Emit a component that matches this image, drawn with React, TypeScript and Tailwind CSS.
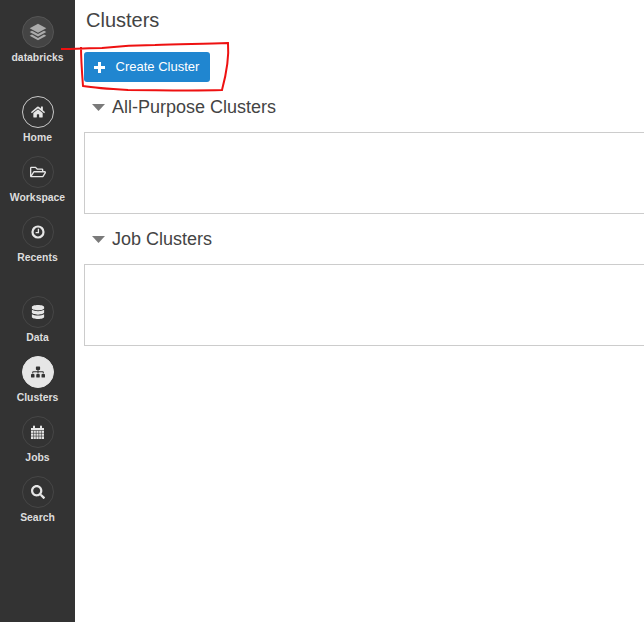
import { FaDatabase, FaHome, FaRegFolderOpen, FaSearch, FaSitemap } from 'react-icons/fa';
import type { ComponentType } from 'react';

interface NavItemProps {
  label: string;
  icon: ComponentType<{ size?: number; className?: string }>;
  size?: number;
  state?: 'active' | 'current';
}

function ClockIcon({ size = 14 }: { size?: number }) {
  return (
    <svg width={size} height={size} viewBox="0 0 14 14" fill="none" stroke="currentColor">
      <circle cx="7" cy="7" r="5.5" strokeWidth="2.2" />
      <path d="M7.4 3.8V7.6H4.6" strokeWidth="1.3" />
    </svg>
  );
}

function CalendarIcon({ size = 15 }: { size?: number }) {
  return (
    <svg width={size} height={size} viewBox="0 0 15 15" fill="currentColor">
      <path d="M1 3h2V1.5a1 1 0 0 1 2 0V3h5V1.5a1 1 0 0 1 2 0V3h2v11H1Z" />
      <path d="M1 5.5h13M1 8.3h13M1 11.1h13M3.6 5.5V14M6.2 5.5V14M8.8 5.5V14M11.4 5.5V14" stroke="#333333" strokeWidth="0.6" fill="none" />
    </svg>
  );
}

function NavItem({ label, icon: Icon, size = 13, state }: NavItemProps) {
  const ring =
    state === 'active'
      ? 'bg-[#e6e6e6] border-[#e6e6e6] text-[#333333]'
      : state === 'current'
        ? 'border-[#c8c8c8] text-[#e6e6e6]'
        : 'border-[#464646] text-[#e6e6e6]';
  return (
    <div className="h-[60px] flex flex-col items-center">
      <div className={`w-8 h-8 rounded-full border flex items-center justify-center ${ring}`}>
        <Icon size={size} />
      </div>
      <span className="mt-[3px] text-[10.4px] leading-[14px] font-bold text-[#dddddd]">{label}</span>
    </div>
  );
}

function StackIcon() {
  return (
    <svg width="20" height="20" viewBox="0 0 18 18" fill="#ababab">
      <path d="M9 1.5 16.5 5.6 9 9.7 1.5 5.6Z" />
      <path d="M3.6 7.9 9 10.9 14.4 7.9 16.5 9 9 13.1 1.5 9Z" />
      <path d="M3.6 11.3 9 14.3 14.4 11.3 16.5 12.4 9 16.5 1.5 12.4Z" />
    </svg>
  );
}

function Caret() {
  return (
    <svg width="13" height="7" viewBox="0 0 13 7" fill="#7a7a7a">
      <path d="M0 0H13L6.5 7Z" />
    </svg>
  );
}

function Section({ title }: { title: string }) {
  return (
    <>
      <div className="h-[24px] flex items-center pl-[8px]">
        <Caret />
        <span className="ml-[7px] text-[18px] leading-[24px] text-[#444444]">{title}</span>
      </div>
      <div className="mt-[13px] h-[82px] border border-r-0 border-[#cccccc] bg-white" />
    </>
  );
}

export default function App() {
  return (
    <div className="relative flex h-[622px] w-[644px] overflow-hidden bg-white font-['Liberation_Sans',Arial,sans-serif]">
      <aside className="w-[75px] shrink-0 bg-[#333333] pt-4">
        <div className="flex flex-col items-center">
          <div className="w-8 h-8 rounded-full border border-[#555555] bg-[#444444] flex items-center justify-center">
            <StackIcon />
          </div>
          <span className="mt-[3px] text-[10.4px] leading-[14px] font-bold text-[#dddddd]">databricks</span>
        </div>
        <div className="mt-[31px]">
          <NavItem label="Home" icon={FaHome} state="current" size={14} />
          <NavItem label="Workspace" icon={FaRegFolderOpen} size={16} />
          <NavItem label="Recents" icon={ClockIcon} size={14} />
        </div>
        <div className="mt-5">
          <NavItem label="Data" icon={FaDatabase} size={14} />
          <NavItem label="Clusters" icon={FaSitemap} size={14} state="active" />
          <NavItem label="Jobs" icon={CalendarIcon} size={15} />
          <NavItem label="Search" icon={FaSearch} size={14} />
        </div>
      </aside>
      <main className="flex-1 pl-[9px] min-w-0">
        <h1 className="mt-[8px] ml-[2px] text-[20px] leading-[24px] text-[#444444]">Clusters</h1>
        <button className="mt-[20px] h-[30px] w-[126px] rounded-[3px] bg-[#2086d0] flex items-center pl-[10px] text-[13px] text-white">
          <svg width="11" height="11" viewBox="0 0 11 11" fill="white">
            <path d="M4 0H7V4H11V7H7V11H4V7H0V4H4Z" />
          </svg>
          <span className="ml-[10.5px]">Create Cluster</span>
        </button>
        <div className="mt-[13px]">
          <Section title="All-Purpose Clusters" />
        </div>
        <div className="mt-[13px]">
          <Section title="Job Clusters" />
        </div>
      </main>
      <svg className="absolute left-0 top-0 pointer-events-none" width="644" height="622" fill="none" stroke="#ee1111" strokeWidth="2">
        <path d="M61 49 C 75 49 90 48 102 48 C 120 46 140 45 155 45 C 180 44 205 44 228 43 C 229 55 226 75 222 90 C 190 91 155 90 128 90 C 110 89 95 88 83 86 C 82 73 81 60 81 47" />
      </svg>
    </div>
  );
}
